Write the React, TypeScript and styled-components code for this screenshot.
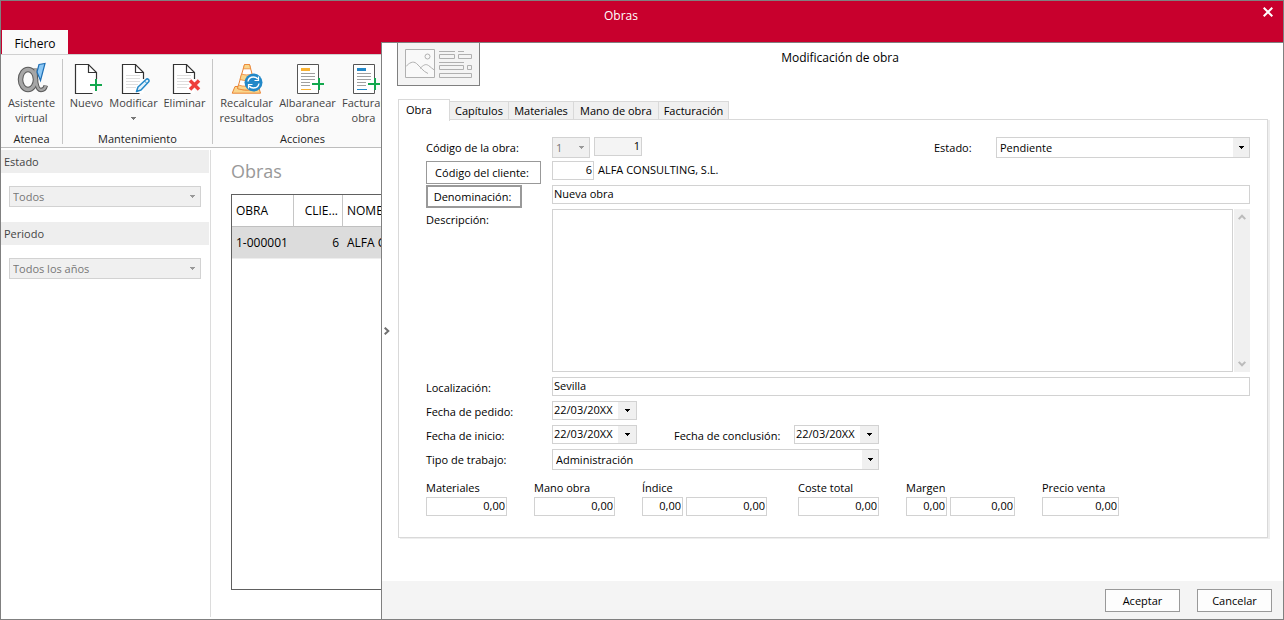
import React from "react";
import styled, { createGlobalStyle, css } from "styled-components";

const GlobalStyle = createGlobalStyle`
  *, *::before, *::after { box-sizing: border-box; }
  body { margin: 0; background: #fff; }
  body, button, input, select, textarea {
    font-family: "Open Sans", "Noto Sans", "Liberation Sans", sans-serif;
    font-size: 11px;
    color: #000;
  }
`;

const Window = styled.div`
  position: relative;
  display: flex;
  flex-direction: column;
  min-height: 100vh;
  overflow: hidden;
  border: 1px solid #808080;
  background: #fff;
`;

const TitleBar = styled.header`
  display: flex;
  flex-direction: column;
  justify-content: space-between;
  height: 53px;
  background: #c8002d;
`;

const TitleRow = styled.div`
  display: grid;
  grid-template-columns: 1fr 30px;
  height: 29px;
`;

const WindowTitle = styled.h1`
  margin: 0;
  padding-right: 12px;
  color: #fff;
  font-size: 12px;
  font-weight: 400;
  line-height: 30px;
  text-align: center;
`;

const CloseButton = styled.button`
  display: grid;
  place-items: center;
  height: 22px;
  padding: 0;
  border: 0;
  background: none;
`;

const RibbonTab = styled.button`
  align-self: flex-start;
  width: 66px;
  height: 24px;
  margin-left: 1px;
  padding: 2px 0 0;
  border: 0;
  background: #fafafa;
  font-size: 12px;
`;

const Ribbon = styled.div`
  display: flex;
  height: 94px;
  padding: 4px 0 3px;
  border-top: 1px solid #d0d0d0;
  border-bottom: 1px solid #bdbdbd;
  background: #fafafa;
`;

const RibbonGroup = styled.section<{ $width: number }>`
  display: flex;
  flex-direction: column;
  justify-content: space-between;
  width: ${(p) => p.$width}px;
  border-right: 1px solid #c6c6c6;
`;

const RibbonButtons = styled.div`
  display: flex;
  justify-content: center;
`;

const RibbonLabel = styled.h2`
  margin: 0;
  color: #222;
  font-size: 11px;
  font-weight: 400;
  line-height: 10px;
  text-align: center;
`;

const RibbonButton = styled.button<{ $width: number }>`
  display: flex;
  flex-direction: column;
  align-items: center;
  flex: none;
  width: ${(p) => p.$width}px;
  padding: 3px 0 0;
  border: 0;
  background: none;
  color: #444;
  line-height: 15px;
  white-space: nowrap;
`;

const RibbonIcon = styled.svg`
  display: block;
  width: 32px;
  height: 32px;
  margin-bottom: 1px;
`;

const MenuArrow = styled.svg`
  width: 7px;
  height: 15px;
`;

const Body = styled.div`
  display: flex;
  flex: 1;
  padding: 2px 0;
`;

const Sidebar = styled.aside`
  flex: none;
  width: 210px;
  padding-right: 1px;
  border-right: 1px solid #dcdcdc;
`;

const FilterTitle = styled.label`
  display: block;
  height: 23px;
  padding-left: 3px;
  background: #eee;
  color: #444;
  line-height: 23px;
`;

const FilterBody = styled.div`
  padding: 13px 8px 15px;
`;

const SelectBox = styled.span<{ $width?: number }>`
  display: inline-grid;
  grid-template-columns: 1fr 17px;
  flex: none;
  width: ${(p) => (p.$width ? `${p.$width}px` : "100%")};
  height: 21px;
  vertical-align: top;
`;

const SelectField = styled.select`
  grid-area: 1 / 1 / 2 / 3;
  min-width: 0;
  margin: 0;
  padding: 0 17px 0 3px;
  border: 1px solid #d2d2d2;
  border-radius: 0;
  background: #fff;
  appearance: none;
  &:disabled {
    background: #f0f0f0;
    color: #777;
    opacity: 1;
  }
`;

const SelectArrow = styled.span<{ $disabled?: boolean }>`
  display: grid;
  place-items: center;
  grid-area: 1 / 2;
  margin: 1px 1px 1px 0;
  background: #f0f0f0;
  color: ${(p) => (p.$disabled ? "#999" : "#000")};
  pointer-events: none;
`;

const Main = styled.main`
  display: flex;
  flex: 1;
  flex-direction: column;
  min-width: 0;
  padding: 0 20px 27px;
`;

const ListTitle = styled.h2`
  margin: 0;
  height: 44px;
  color: #999;
  font-size: 18px;
  font-weight: 400;
  line-height: 42px;
`;

const ListFrame = styled.div`
  flex: 1;
  border: 1px solid #606060;
`;

const ListTable = styled.table`
  width: 100%;
  table-layout: fixed;
  border-collapse: separate;
  border-spacing: 0;
  font-size: 12px;
`;

const cell = css<{ $right?: boolean }>`
  height: 32px;
  padding: 0 4px;
  font-weight: 400;
  text-align: ${(p) => (p.$right ? "right" : "left")};
  white-space: nowrap;
`;

const HeadCell = styled.th<{ $right?: boolean }>`
  ${cell}
  border-right: 1px solid #c6c6c6;
  border-bottom: 1px solid #c0c0c0;
`;

const DataCell = styled.td<{ $right?: boolean }>`
  ${cell}
  background: #dcdcdc;
  border-bottom: 1px solid #eee;
`;

const Dialog = styled.section`
  position: absolute;
  top: 41px;
  right: 0;
  bottom: 0;
  left: 380px;
  display: grid;
  grid-template-columns: 15px 1fr;
  grid-template-rows: 56px 1fr 38px;
  border-top: 1px solid #808080;
  border-left: 1px solid #808080;
  background: #fff;
`;

const GripButton = styled.button`
  display: grid;
  place-items: center;
  grid-column: 1;
  grid-row: 1 / 4;
  align-self: center;
  width: 9px;
  height: 20px;
  padding: 0;
  border: 0;
  background: none;
`;

const DialogHeader = styled.header`
  display: grid;
  grid-template-columns: 83px 1fr 83px;
  align-items: start;
  grid-column: 2;
  grid-row: 1;
`;

const DialogBadge = styled.div`
  height: 43px;
  border: 1px solid #808080;
  border-top: 0;
  background: #f4f4f4;
`;

const DialogTitle = styled.h2`
  margin: 0;
  font-size: 12px;
  font-weight: 400;
  line-height: 30px;
  text-align: center;
`;

const DialogBody = styled.div`
  display: flex;
  flex-direction: column;
  grid-column: 2;
  grid-row: 2;
  min-width: 0;
  padding: 0 15px 43px 1px;
`;

const Tabs = styled.div`
  display: flex;
  align-items: flex-end;
  height: 21px;
`;

const Tab = styled.button<{ $active?: boolean; $width: number }>`
  width: ${(p) => p.$width}px;
  height: 19px;
  padding: 0;
  border: 1px solid #d9d9d9;
  border-left: 0;
  background: #f0f0f0;
  line-height: 17px;
  ${(p) =>
    p.$active &&
    css`
      height: 22px;
      margin-bottom: -1px;
      padding: 0 8px 2px 7px;
      border-bottom: 0;
      border-left: 1px solid #d9d9d9;
      background: #fff;
      text-align: left;
      z-index: 1;
    `}
`;

const Panel = styled.form`
  display: flex;
  flex: 1;
  flex-direction: column;
  margin-top: -1px;
  padding: 17px 17px 21px 27px;
  border: 1px solid #d9d9d9;
  box-shadow: 2px 1px 0 #eee;
`;

const Row = styled.div<{ $grow?: boolean }>`
  display: flex;
  align-items: flex-start;
  height: 24px;
  flex: none;
  ${(p) =>
    p.$grow &&
    css`
      flex: 1;
      align-items: stretch;
      height: auto;
      min-height: 60px;
      padding-bottom: 5px;
    `}
`;

const LabelCell = styled.div`
  flex: none;
  width: 126px;
`;

const Label = styled.label<{ $width?: number }>`
  display: block;
  flex: none;
  width: ${(p) => (p.$width ? `${p.$width}px` : "auto")};
  line-height: 22px;
  white-space: nowrap;
`;

const LookupButton = styled.button<{ $width: number; $focused?: boolean }>`
  display: block;
  width: ${(p) => p.$width}px;
  height: 23px;
  padding: 0 3px 0 0;
  border: ${(p) => (p.$focused ? 2 : 1)}px solid #999;
  background: #fff;
`;

const TextField = styled.input<{ $width?: number; $right?: boolean }>`
  flex: ${(p) => (p.$width ? "none" : "1")};
  width: ${(p) => (p.$width ? `${p.$width}px` : "auto")};
  min-width: 0;
  height: 19px;
  padding: 0 1px 2px;
  border: 1px solid #d2d2d2;
  border-radius: 0;
  text-align: ${(p) => (p.$right ? "right" : "left")};
  &:read-only {
    background: #f4f4f4;
  }
`;

const FieldNote = styled.output`
  padding-left: 4px;
  line-height: 18px;
`;

const PairGap = styled.div`
  display: flex;
  gap: 4px;
`;

const StatusField = styled.div`
  display: flex;
  margin-left: auto;
`;

const Description = styled.textarea`
  flex: 1;
  min-width: 0;
  margin: 0 1px 0 0;
  padding: 2px;
  border: 1px solid #d2d2d2;
  border-radius: 0;
  resize: none;
`;

const ScrollTrack = styled.div`
  display: flex;
  flex-direction: column;
  align-items: center;
  justify-content: space-between;
  width: 16px;
  padding: 5px 0;
  background: #f0f0f0;
`;

const DateBox = styled.div`
  display: flex;
  width: 85px;
  height: 19px;
  border: 1px solid #d2d2d2;
`;

const DateInput = styled.input`
  flex: 1;
  min-width: 0;
  padding: 0 1px 2px;
  border: 0;
`;

const DateButton = styled.button`
  display: grid;
  place-items: center;
  width: 18px;
  padding: 0;
  border: 0;
  background: #f0f0f0;
`;

const EndDate = styled.div`
  display: flex;
  margin-left: 37px;
`;

const Totals = styled.div`
  display: grid;
  grid-template-columns: 81px 81px 129px 81px 109px 77px;
  column-gap: 27px;
  padding-top: 8px;
`;

const TotalTitle = styled.label`
  display: block;
  height: 16px;
  line-height: 14px;
`;

const TotalFields = styled.div`
  display: flex;
  gap: 3px;
`;

const DialogFooter = styled.footer`
  display: flex;
  align-items: flex-start;
  justify-content: flex-end;
  gap: 17px;
  grid-column: 1 / 3;
  grid-row: 3;
  padding: 8px 11px 0;
  background: #f4f4f4;
`;

const ActionButton = styled.button`
  width: 75px;
  height: 23px;
  padding: 0;
  border: 1px solid #999;
  background: #fdfdfd;
`;

function Caret() {
  return (
    <svg width="5" height="3" viewBox="0 0 5 3" aria-hidden="true">
      <path d="M0 0h5v1H4v1H3v1H2V2H1V1H0z" fill="currentColor" />
    </svg>
  );
}

function Dropdown(props: { id: string; value: string; width?: number; disabled?: boolean }) {
  return (
    <SelectBox $width={props.width}>
      <SelectField id={props.id} defaultValue={props.value} disabled={props.disabled}>
        <option>{props.value}</option>
      </SelectField>
      <SelectArrow $disabled={props.disabled}>
        <Caret />
      </SelectArrow>
    </SelectBox>
  );
}

function DateField(props: { id: string; value: string }) {
  return (
    <DateBox>
      <DateInput id={props.id} defaultValue={props.value} />
      <DateButton type="button" aria-label="Abrir calendario">
        <Caret />
      </DateButton>
    </DateBox>
  );
}

function ScrollChevron(props: { down?: boolean }) {
  return (
    <svg width="8" height="6" viewBox="0 0 8 6" fill="none" stroke="#bbb" strokeWidth="2" aria-hidden="true">
      <path d={props.down ? "M.7.9 4 4.3 7.3.9" : "M.7 5.1 4 1.7l3.3 3.4"} />
    </svg>
  );
}

function AtenaIcon() {
  const bowl = "M19.500 6.500c-.300 9 .500 21.500 5.500 21.500 2.800 0 4.200-2 4.800-4.500";
  return (
    <RibbonIcon viewBox="0 0 32 32" fill="none" aria-hidden="true">
      <path d={bowl} stroke="#5a5a5a" strokeWidth="4.500" />
      <ellipse cx="12" cy="17.500" rx="7.500" ry="10" stroke="#5a5a5a" strokeWidth="5.500" />
      <ellipse cx="12" cy="17.500" rx="7.500" ry="10" stroke="#a6a6a6" strokeWidth="3.500" />
      <path d={bowl} stroke="#a6a6a6" strokeWidth="2.500" />
      <path d="m23 2.500 6-1-4.500 17-3.500-8.500z" fill="#8cc8f5" stroke="#1f6fb5" strokeWidth="1.200" />
    </RibbonIcon>
  );
}

function Sheet() {
  return (
    <>
      <path d="M4.500 2.500h13l8 8v21h-21z" fill="#fff" />
      <path d="M21.500 31.500h-17v-29h13l8 8V17" fill="none" stroke="#333" strokeWidth="1.200" />
      <path d="M17.500 2.500v8h8" fill="none" stroke="#333" strokeWidth="1.200" />
    </>
  );
}

function SheetLines() {
  return <path d="M8 13.500h14M8 16.500h14M8 19.500h14M8 22.500h12M8 25.500h10" stroke="#dedede" />;
}

function NewIcon() {
  return (
    <RibbonIcon viewBox="0 0 32 32" aria-hidden="true">
      <Sheet />
      <path d="M25 17v12M19 23h12" stroke="#12a84d" strokeWidth="2" />
    </RibbonIcon>
  );
}

function EditIcon() {
  return (
    <RibbonIcon viewBox="0 0 32 32" aria-hidden="true">
      <Sheet />
      <SheetLines />
      <path
        d="m18.500 29.500 1.500-4.500 8-7.500c1-1 2-.5 2.500 0s.8 1.500 0 2.500l-7.500 8z"
        fill="#e3f2fb"
        stroke="#2288c8"
        strokeWidth="1.500"
        strokeLinejoin="round"
      />
      <path d="m26.500 19 2.500 2.500" stroke="#2288c8" />
    </RibbonIcon>
  );
}

function DeleteIcon() {
  return (
    <RibbonIcon viewBox="0 0 32 32" aria-hidden="true">
      <Sheet />
      <SheetLines />
      <path d="m21 18.500 9 9m0-9-9 9" stroke="#ee3e3a" strokeWidth="3.500" />
    </RibbonIcon>
  );
}

function ConeIcon() {
  return (
    <RibbonIcon viewBox="0 0 32 32" aria-hidden="true">
      <path d="M4 24.500 1.200 31.200h28.300l-2-6.700z" fill="#f9d58c" stroke="#ea8434" strokeLinejoin="round" />
      <path d="M13.500 2.500h5L25 26.500c-5 2-13 2-18.500 0z" fill="#fff" stroke="#ea8434" strokeLinejoin="round" />
      <path d="M13.500 2.500h5l1.200 4.300h-7.400zM10.500 12c3 1.200 7.500 1.200 10.500 0l1.500 5.500c-4 1.500-9.500 1.500-13.500 0z" fill="#f9d58c" stroke="#ea8434" strokeWidth=".8" />
      <path d="M7.500 23c4 1.700 12 1.700 16.500 0l1 3.500c-5 2-13 2-18.500 0z" fill="#f9d58c" stroke="#ea8434" strokeWidth=".8" />
      <circle cx="22.500" cy="20.500" r="9" fill="#2288c8" />
      <path d="M17 19.500c.5-3 3-4.500 5.500-4.500 1.800 0 3.300.7 4.300 2M28 21.500c-.5 3-3 4.500-5.500 4.500-1.800 0-3.300-.7-4.300-2" fill="none" stroke="#fff" strokeWidth="1.400" />
      <path d="M27.500 14.500v4h-4M17.500 26.500v-4h4" fill="none" stroke="#fff" strokeWidth="1.200" />
    </RibbonIcon>
  );
}

function NoteIcon(props: { accent: string }) {
  return (
    <RibbonIcon viewBox="0 0 32 32" aria-hidden="true">
      <path d="M26.500 16.500v-14h-21v29h21V28" fill="#fff" stroke="#555" />
      <path d="M9 6h9v3H9z" fill={props.accent} />
      <path d="M9 11.500h14M9 14.500h14M9 17.500h14M9 20.500h9M9 23.500h9" stroke="#a0a0a0" />
      <path d="M9 27.500h10" stroke={props.accent} />
      <path d="M27 16v12M20 22h12" stroke="#12a84d" strokeWidth="2" />
    </RibbonIcon>
  );
}

function CardIcon() {
  return (
    <svg width="81" height="42" viewBox="0 0 81 42" fill="none" stroke="#b0b0b0" aria-hidden="true">
      <path d="M7.500 6.500h29v28h-29z" fill="#f9f9f9" />
      <circle cx="29.500" cy="13.500" r="2.500" />
      <path d="M8 23.500c3-3.500 7-6 10.500-3 3.500 2.800 6.500 8 11.500 10M22 25.500c3.500-3.500 5.500-5 8.500-3 2 1.400 4 3.500 6 4.500" />
      <path d="M41 8.500h16M60 8.500h6M41 19.500h25M41.500 11.500h15v4h-15zM60.500 11.500h13v4h-13zM41.500 22.500h24v4h-24zM69.500 22.500h4v4h-4zM41.500 30.500h32v4h-32z" />
    </svg>
  );
}

const totals = [
  { id: "materiales", title: "Materiales", widths: [81] },
  { id: "mano", title: "Mano obra", widths: [81] },
  { id: "indice", title: "Índice", widths: [41, 81] },
  { id: "coste", title: "Coste total", widths: [81] },
  { id: "margen", title: "Margen", widths: [41, 65] },
  { id: "precio", title: "Precio venta", widths: [77] },
];

export default function App() {
  return (
    <Window>
      <GlobalStyle />
      <TitleBar>
        <TitleRow>
          <WindowTitle>Obras</WindowTitle>
          <CloseButton aria-label="Cerrar">
            <svg width="10" height="10" viewBox="0 0 10 10" stroke="#fff" strokeWidth="2" aria-hidden="true">
              <path d="m.7.700 8.600 8.600m0-8.600L.7 9.300" />
            </svg>
          </CloseButton>
        </TitleRow>
        <RibbonTab>Fichero</RibbonTab>
      </TitleBar>
      <Ribbon>
        <RibbonGroup $width={62}>
          <RibbonButtons>
            <RibbonButton $width={56}>
              <AtenaIcon />
              Asistente
              <br />
              virtual
            </RibbonButton>
          </RibbonButtons>
          <RibbonLabel>Atenea</RibbonLabel>
        </RibbonGroup>
        <RibbonGroup $width={150}>
          <RibbonButtons>
            <RibbonButton $width={40}>
              <NewIcon />
              Nuevo
            </RibbonButton>
            <RibbonButton $width={54}>
              <EditIcon />
              Modificar
              <MenuArrow viewBox="0 0 7 15" aria-hidden="true">
                <path d="M1 7h5v1H5v1H4v1H3V9H2V8H1z" fill="#777" />
              </MenuArrow>
            </RibbonButton>
            <RibbonButton $width={48}>
              <DeleteIcon />
              Eliminar
            </RibbonButton>
          </RibbonButtons>
          <RibbonLabel>Mantenimiento</RibbonLabel>
        </RibbonGroup>
        <RibbonGroup $width={180}>
          <RibbonButtons>
            <RibbonButton $width={60}>
              <ConeIcon />
              Recalcular
              <br />
              resultados
            </RibbonButton>
            <RibbonButton $width={62}>
              <NoteIcon accent="#f9b233" />
              Albaranear
              <br />
              obra
            </RibbonButton>
            <RibbonButton $width={50}>
              <NoteIcon accent="#2288c8" />
              Facturar
              <br />
              obra
            </RibbonButton>
          </RibbonButtons>
          <RibbonLabel>Acciones</RibbonLabel>
        </RibbonGroup>
      </Ribbon>
      <Body>
        <Sidebar>
          <FilterTitle htmlFor="filtro-estado">Estado</FilterTitle>
          <FilterBody>
            <Dropdown id="filtro-estado" value="Todos" disabled />
          </FilterBody>
          <FilterTitle htmlFor="filtro-periodo">Periodo</FilterTitle>
          <FilterBody>
            <Dropdown id="filtro-periodo" value="Todos los años" disabled />
          </FilterBody>
        </Sidebar>
        <Main>
          <ListTitle>Obras</ListTitle>
          <ListFrame>
            <ListTable>
              <colgroup>
                <col width="62" />
                <col width="49" />
                <col />
              </colgroup>
              <thead>
                <tr>
                  <HeadCell>OBRA</HeadCell>
                  <HeadCell $right>CLIE...</HeadCell>
                  <HeadCell>NOMBRE</HeadCell>
                </tr>
              </thead>
              <tbody>
                <tr>
                  <DataCell>1-000001</DataCell>
                  <DataCell $right>6</DataCell>
                  <DataCell>ALFA CONSULTING, S.L.</DataCell>
                </tr>
              </tbody>
            </ListTable>
          </ListFrame>
        </Main>
      </Body>

      <Dialog role="dialog" aria-labelledby="dialog-title">
        <GripButton aria-label="Contraer">
          <svg width="6" height="8" viewBox="0 0 6 8" fill="none" stroke="#707070" strokeWidth="2" aria-hidden="true">
            <path d="M.7.7 4.300 4 .7 7.300" />
          </svg>
        </GripButton>
        <DialogHeader>
          <DialogBadge>
            <CardIcon />
          </DialogBadge>
          <DialogTitle id="dialog-title">Modificación de obra</DialogTitle>
        </DialogHeader>
        <DialogBody>
          <Tabs role="tablist">
            <Tab role="tab" $active $width={52}>Obra</Tab>
            <Tab role="tab" $width={59}>Capítulos</Tab>
            <Tab role="tab" $width={65}>Materiales</Tab>
            <Tab role="tab" $width={85}>Mano de obra</Tab>
            <Tab role="tab" $width={70}>Facturación</Tab>
          </Tabs>
          <Panel>
            <Row>
              <LabelCell>
                <Label htmlFor="serie">Código de la obra:</Label>
              </LabelCell>
              <PairGap>
                <Dropdown id="serie" value="1" width={38} disabled />
                <TextField defaultValue="1" readOnly $width={48} $right aria-label="Número de obra" />
              </PairGap>
              <StatusField>
                <Label htmlFor="estado" $width={62}>Estado:</Label>
                <Dropdown id="estado" value="Pendiente" width={254} />
              </StatusField>
            </Row>
            <Row>
              <LabelCell>
                <LookupButton type="button" $width={115}>Código del cliente:</LookupButton>
              </LabelCell>
              <TextField defaultValue="6" $width={42} $right aria-label="Código del cliente" />
              <FieldNote>ALFA CONSULTING, S.L.</FieldNote>
            </Row>
            <Row>
              <LabelCell>
                <LookupButton type="button" $width={96} $focused>Denominación:</LookupButton>
              </LabelCell>
              <TextField defaultValue="Nueva obra" aria-label="Denominación" />
            </Row>
            <Row $grow>
              <LabelCell>
                <Label htmlFor="descripcion">Descripción:</Label>
              </LabelCell>
              <Description id="descripcion" />
              <ScrollTrack>
                <ScrollChevron />
                <ScrollChevron down />
              </ScrollTrack>
            </Row>
            <Row>
              <LabelCell>
                <Label htmlFor="localizacion">Localización:</Label>
              </LabelCell>
              <TextField id="localizacion" defaultValue="Sevilla" />
            </Row>
            <Row>
              <LabelCell>
                <Label htmlFor="pedido">Fecha de pedido:</Label>
              </LabelCell>
              <DateField id="pedido" value="22/03/20XX" />
            </Row>
            <Row>
              <LabelCell>
                <Label htmlFor="inicio">Fecha de inicio:</Label>
              </LabelCell>
              <DateField id="inicio" value="22/03/20XX" />
              <EndDate>
                <Label htmlFor="conclusion" $width={120}>Fecha de conclusión:</Label>
                <DateField id="conclusion" value="22/03/20XX" />
              </EndDate>
            </Row>
            <Row>
              <LabelCell>
                <Label htmlFor="tipo">Tipo de trabajo:</Label>
              </LabelCell>
              <Dropdown id="tipo" value="Administración" width={327} />
            </Row>
            <Totals>
              {totals.map((t) => (
                <div key={t.id}>
                  <TotalTitle htmlFor={t.id}>{t.title}</TotalTitle>
                  <TotalFields>
                    {t.widths.map((w, i) => (
                      <TextField
                        key={i}
                        id={i === 0 ? t.id : undefined}
                        aria-label={i === 0 ? undefined : `${t.title}, importe`}
                        defaultValue="0,00"
                        $width={w}
                        $right
                      />
                    ))}
                  </TotalFields>
                </div>
              ))}
            </Totals>
          </Panel>
        </DialogBody>
        <DialogFooter>
          <ActionButton>Aceptar</ActionButton>
          <ActionButton>Cancelar</ActionButton>
        </DialogFooter>
      </Dialog>
    </Window>
  );
}
